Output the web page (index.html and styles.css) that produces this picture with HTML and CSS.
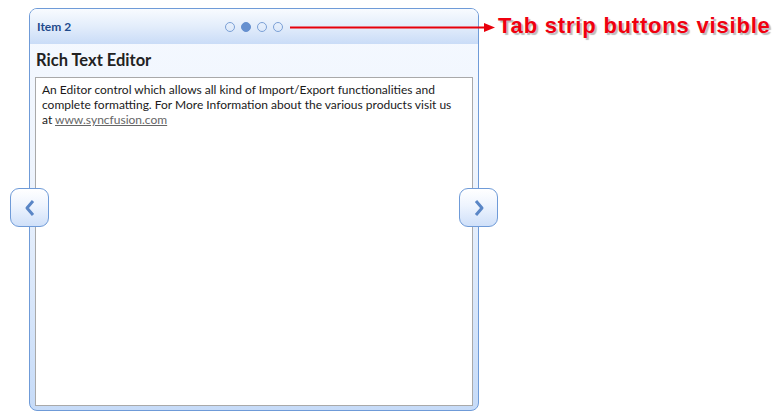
FILE: index.html
```html
<!DOCTYPE html>
<html>
<head>
<meta charset="utf-8">
<link rel="stylesheet" href="styles.css">
</head>
<body>
<div class="stage">
  <div class="panel">
    <div class="header">
      <span class="item-title">Item 2</span>
      <div class="dots">
        <span class="dot"></span>
        <span class="dot active"></span>
        <span class="dot"></span>
        <span class="dot"></span>
      </div>
    </div>
    <div class="body">
      <div class="title">Rich Text Editor</div>
      <div class="editor">
        <p class="text">An Editor control which allows all kind of Import/Export functionalities and complete formatting. For More Information about the various products visit us at <a class="link" href="#">www.syncfusion.com</a></p>
      </div>
    </div>
  </div>
  <button class="nav nav-prev" aria-label="Previous">
    <svg width="14" height="18" viewBox="0 0 14 18"><path d="M10 2 L4 9 L10 16" fill="none" stroke="#5a86c6" stroke-width="3" stroke-linejoin="round"/></svg>
  </button>
  <button class="nav nav-next" aria-label="Next">
    <svg width="14" height="18" viewBox="0 0 14 18"><path d="M4 2 L10 9 L4 16" fill="none" stroke="#5a86c6" stroke-width="3" stroke-linejoin="round"/></svg>
  </button>
  <div class="callout">
    <svg class="arrow" width="206" height="12" viewBox="0 0 206 12"><path d="M0 5.5 L194 5.5" stroke="#e8000b" stroke-width="2"/><path d="M194 1 L205 5.5 L194 10 Z" fill="#e8000b"/></svg>
    <span class="callout-text">Tab strip buttons visible</span>
  </div>
</div>
</body>
</html>
```
FILE: styles.css
```css
html, body {
  margin: 0;
  padding: 0;
  background: #ffffff;
  overflow: hidden;
}
.stage {
  position: relative;
  width: 784px;
  height: 411px;
  padding: 8px 0 0 29px;
  box-sizing: border-box;
}
.panel {
  width: 450px;
  height: 403px;
  box-sizing: border-box;
  border: 1px solid #6f9bd8;
  border-radius: 8px;
  display: flex;
  flex-direction: column;
  overflow: hidden;
  background: linear-gradient(to bottom, #f5f9ff 0%, #eef4fd 40%, #c6dbf8 100%);
}
.header {
  height: 35px;
  flex: none;
  display: flex;
  align-items: center;
  padding: 0 0 0 7px;
  background: linear-gradient(to bottom, #f8fbff 0%, #e3edfb 50%, #c9dcf7 100%);
}
.item-title {
  font-family: Lato, "Liberation Sans", sans-serif;
  font-weight: bold;
  font-size: 12px;
  color: #1f4a8c;
}
.dots {
  display: flex;
  gap: 6px;
  margin-left: 154px;
}
.dot {
  width: 8px;
  height: 8px;
  border: 1.3px solid #7ba0d6;
  border-radius: 50%;
  box-sizing: content-box;
  flex: none;
}
.dot.active {
  background: #6690cf;
  border-color: #6690cf;
}
.body {
  flex: 1;
  display: flex;
  flex-direction: column;
  padding: 0 5px 4px 5px;
  min-height: 0;
}
.title {
  height: 33px;
  flex: none;
  display: flex;
  align-items: center;
  padding-left: 1px;
  padding-bottom: 1px;
  box-sizing: border-box;
  font-family: Lato, "Liberation Sans", sans-serif;
  font-weight: bold;
  font-size: 16.5px;
  color: #222222;
}
.editor {
  flex: 1;
  background: #ffffff;
  border: 1px solid #a9a9a9;
  padding: 4px 16px 3px 6px;
}
.text {
  margin: 0;
  font-family: Lato, "Liberation Sans", sans-serif;
  font-size: 12px;
  line-height: 15px;
  color: #1a1a1a;
}
.link {
  color: #666666;
  text-decoration: underline;
}
.nav {
  position: absolute;
  width: 39px;
  height: 39px;
  box-sizing: border-box;
  border: 1px solid #6f9bd8;
  border-radius: 9px;
  background: linear-gradient(to bottom, #ffffff 0%, #eef4fe 45%, #cfe0f9 100%);
  padding: 0;
  display: flex;
  align-items: center;
  justify-content: center;
}
.nav-prev {
  left: 10px;
  top: 188px;
}
.nav-next {
  left: 459px;
  top: 188px;
}
.callout {
  position: absolute;
  left: 290px;
  top: 13px;
  display: flex;
  align-items: center;
  gap: 2px;
}
.arrow {
  flex: none;
  margin-top: 4px;
}
.callout-text {
  font-family: "Liberation Sans", Arial, sans-serif;
  font-weight: bold;
  font-size: 22px;
  letter-spacing: 0.8px;
  color: #f0000f;
  text-shadow: 2px 2px 1px #bdbdbd;
}
```
